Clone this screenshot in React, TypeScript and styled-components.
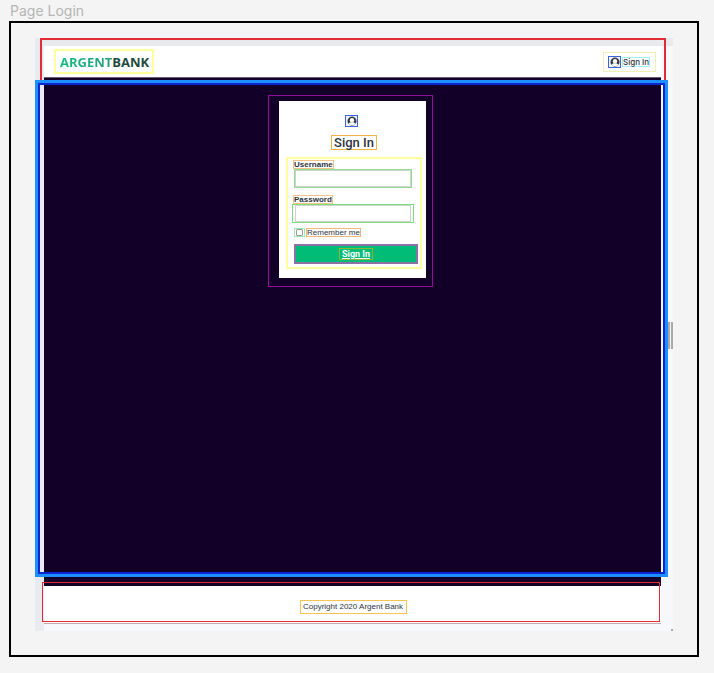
import React from "react";
import styled, { createGlobalStyle } from "styled-components";

const GlobalStyle = createGlobalStyle`
  *, *::before, *::after { box-sizing: border-box; }
  body {
    margin: 0;
    background: #f4f4f4;
    font-family: "Liberation Sans", Arial, sans-serif;
    color: #2c3440;
  }
`;

const Canvas = styled.div`
  display: flex;
  flex-direction: column;
  min-height: 100vh;
  padding: 1px 15px 16px 9px;
`;

const FrameTitle = styled.h1`
  margin: 0;
  padding-left: 1px;
  height: 20px;
  font: 400 14px/20px Inter, sans-serif;
  color: #b5b5b5;
`;

const Frame = styled.div`
  border: 2px solid #000;
  padding: 15px 24px 24px;
`;

const Shot = styled.div`
  position: relative;
  border-left: 9px solid #eaebf0;
  border-top: 8px solid #e9eaee;
  padding: 0 12px 7px 0;
  background: #f7f8fb;
`;

const Header = styled.header`
  position: relative;
  display: flex;
  justify-content: space-between;
  align-items: flex-start;
  height: 32px;
  padding: 3px 5px 0 10px;
  background: #fff;
  border-bottom: 1px solid #6d5a78;

  &::after {
    content: "";
    position: absolute;
    inset: -8px -5px -6px -4px;
    border: 2px solid #e32b35;
    pointer-events: none;
  }
`;

const Logo = styled.a`
  width: 100px;
  height: 25px;
  padding-left: 4px;
  border: 2px solid #ffff9c;
  font: 700 13px/22px "Open Sans", sans-serif;
  text-decoration: none;
  color: #1d4a3c;
`;

const LogoAccent = styled.span`
  background: linear-gradient(90deg, #10bd7c, #2a9c78);
  background-clip: text;
  color: transparent;
`;

const NavLink = styled.a`
  display: flex;
  align-items: center;
  gap: 1px;
  width: 53px;
  height: 20px;
  margin-top: 3px;
  padding-left: 4px;
  border: 1px solid #f0f0b4;
  text-decoration: none;
  color: #2c3440;
`;

const NavText = styled.span`
  border: 1px solid #a5edf5;
  font: 500 8px/8px Inter, sans-serif;
  white-space: nowrap;
`;

const IconBox = styled.span<{ $centered?: boolean }>`
  display: flex;
  justify-content: center;
  width: 13px;
  height: 12px;
  margin-right: ${(p) => (p.$centered ? "5px" : "0")};
  border: 1px solid #3d63d8;
  background: #eef2ff;
`;

const Main = styled.main`
  position: relative;
  display: flex;
  justify-content: center;
  align-items: flex-start;
  min-height: calc(100vh - 165px);
  padding: 23px 0;
  background: #130029;

  &::after {
    content: "";
    position: absolute;
    inset: 2px -7px 9px -9px;
    border: 3px solid #1e8fff;
    box-shadow: inset 0 0 0 2px #0926d0;
    pointer-events: none;
  }
`;

const Card = styled.section`
  position: relative;
  display: flex;
  flex-direction: column;
  align-items: center;
  width: 147px;
  padding: 14px 4px 9px 7px;
  background: #fff;

  &::after {
    content: "";
    position: absolute;
    inset: -6px -7px -9px -11px;
    border: 1px solid #930d9c;
    pointer-events: none;
  }
`;

const Title = styled.h2`
  margin: 8px 0 7px;
  width: 46px;
  border: 1px solid #f0b444;
  font: 500 13px/13px Roboto, sans-serif;
  text-align: center;
  white-space: nowrap;
`;

const Form = styled.form`
  display: flex;
  flex-direction: column;
  align-items: flex-start;
  width: 100%;
  padding: 1px 3px 3px 5px;
  border: 2px solid #ffff9c;
`;

const Label = styled.label`
  border: 1px solid #f2c28a;
  font: 700 8px/7px "Liberation Sans", sans-serif;
  white-space: nowrap;
`;

const Field = styled.div<{ $ringed?: boolean }>`
  width: ${(p) => (p.$ringed ? "122px" : "118px")};
  height: 19px;
  margin: ${(p) => (p.$ringed ? "0 0 5px -1px" : "0 0 7px 1px")};
  padding: ${(p) => (p.$ringed ? "0 2px" : "0")};
  border: 1px solid ${(p) => (p.$ringed ? "#7be07b" : "#92d992")};
`;

const Input = styled.input`
  display: block;
  width: 100%;
  height: 100%;
  padding: 0 3px;
  border: 1px solid #cdd3cd;
  border-radius: 0;
  background: #fff;
  font: 400 8px/12px "Liberation Sans", sans-serif;
  outline: none;
`;

const RememberRow = styled.div`
  display: flex;
  align-items: center;
  gap: 1px;
  margin: 0 0 7px 1px;
`;

const CheckBox = styled.span`
  display: flex;
  align-items: center;
  justify-content: center;
  width: 11px;
  height: 9px;
  border: 1px solid #9be8b0;
`;

const Check = styled.input`
  appearance: none;
  width: 7px;
  height: 7px;
  margin: 0;
  border: 1px solid #9a9a9a;
  border-radius: 1px;
  background: #fff;

  &:checked { background: #00bc77; }
`;

const RememberLabel = styled(Label)`
  font-weight: 400;
  border-color: #f0b878;
`;

const SubmitButton = styled.button`
  display: flex;
  align-items: center;
  justify-content: center;
  width: 124px;
  height: 20px;
  margin-left: 1px;
  padding: 0;
  border: 2px solid #8a72a4;
  background: #00bc77;
  color: #fff;
`;

const ButtonText = styled.span`
  width: 34px;
  border: 1px solid #85b83a;
  font: 700 9px/10px Roboto, sans-serif;
  text-decoration: underline;
`;

const Footer = styled.footer`
  position: relative;
  display: flex;
  justify-content: center;
  align-items: flex-start;
  height: 38px;
  padding: 14px 0 0 2px;
  background: #fff;
  border-bottom: 1px solid #c9a5b2;

  &::after {
    content: "";
    position: absolute;
    inset: -4px 1px 1px -2px;
    border: 1px solid #e32b35;
    pointer-events: none;
  }
`;

const Copyright = styled.p`
  margin: 0;
  width: 107px;
  padding: 1px 2px;
  border: 1px solid #f5c451;
  font: 400 8px/10px "Liberation Sans", sans-serif;
  white-space: nowrap;
`;

const Splitter = styled.div`
  position: absolute;
  top: 276px;
  right: 0;
  width: 5px;
  height: 27px;
  border: solid #a9a9ad;
  border-width: 0 2px;
`;

const Grip = styled.span`
  position: absolute;
  right: 0;
  bottom: 0;
  width: 2px;
  height: 2px;
  background: #aaaaaa;
`;

function UserIcon({ centered }: { centered?: boolean }) {
  return (
    <IconBox $centered={centered} aria-hidden="true">
      <svg width="10" height="10" viewBox="0 0 20 20">
        <circle cx="10" cy="10" r="8.6" fill="#2a3038" stroke="#646a74" strokeWidth="1" />
        <circle cx="10" cy="8.6" r="4.4" fill="#fff" />
        <path d="M3.2 15.6C4.4 13.2 7 12.4 10 12.4s5.6.8 6.8 3.2C14.8 19 5.2 19 3.2 15.6Z" fill="#fff" />
      </svg>
    </IconBox>
  );
}

export default function App() {
  return (
    <>
      <GlobalStyle />
      <Canvas>
        <FrameTitle>Page Login</FrameTitle>
        <Frame>
          <Shot>
            <Header>
              <Logo href="#">
                <LogoAccent>ARGENT</LogoAccent>BANK
              </Logo>
              <NavLink href="#">
                <UserIcon />
                <NavText>Sign In</NavText>
              </NavLink>
            </Header>
            <Main>
              <Card>
                <UserIcon centered />
                <Title>Sign In</Title>
                <Form onSubmit={(e) => e.preventDefault()}>
                  <Label htmlFor="username">Username</Label>
                  <Field>
                    <Input id="username" type="text" />
                  </Field>
                  <Label htmlFor="password">Password</Label>
                  <Field $ringed>
                    <Input id="password" type="password" />
                  </Field>
                  <RememberRow>
                    <CheckBox>
                      <Check id="remember" type="checkbox" />
                    </CheckBox>
                    <RememberLabel htmlFor="remember">Remember me</RememberLabel>
                  </RememberRow>
                  <SubmitButton type="submit">
                    <ButtonText>Sign In</ButtonText>
                  </SubmitButton>
                </Form>
              </Card>
            </Main>
            <Footer>
              <Copyright>Copyright 2020 Argent Bank</Copyright>
            </Footer>
            <Splitter />
            <Grip />
          </Shot>
        </Frame>
      </Canvas>
    </>
  );
}
